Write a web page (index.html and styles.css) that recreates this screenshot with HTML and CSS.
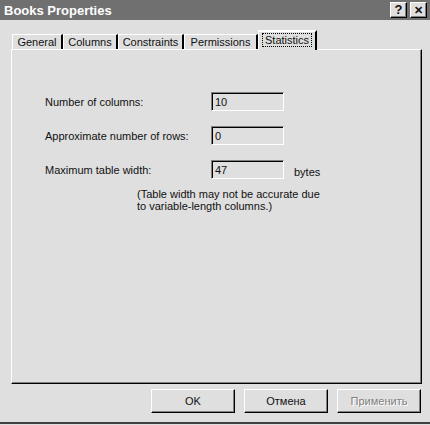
FILE: index.html
```html
<!DOCTYPE html>
<html lang="en">
<head>
<meta charset="utf-8">
<title>Books Properties</title>
<link rel="stylesheet" href="styles.css">
</head>
<body>
<div class="dlg">
  <div class="caption">
    <span class="caption-text">Books Properties</span>
    <span class="cbtn">?</span>
    <span class="cbtn x">&#x2715;</span>
  </div>
  <div class="tabs">
    <div class="tab w1">General</div>
    <div class="tab w2">Columns</div>
    <div class="tab w3">Constraints</div>
    <div class="tab w4">Permissions</div>
    <div class="tab sel w5"><span class="focus">Statistics</span></div>
  </div>
  <div class="page">
    <div class="stats">
      <span class="lbl">Number of columns:</span>
      <span class="fld">10</span>
      <span></span>
      <span class="lbl">Approximate number of rows:</span>
      <span class="fld">0</span>
      <span></span>
      <span class="lbl">Maximum table width:</span>
      <span class="fld">47</span>
      <span class="unit">bytes</span>
    </div>
    <p class="note">(Table width may not be accurate due<br>to variable-length columns.)</p>
  </div>
  <div class="btns">
    <button class="btn">OK</button>
    <button class="btn">Отмена</button>
    <button class="btn off">Применить</button>
  </div>
</div>
</body>
</html>
```
FILE: styles.css
```css
body {margin: 0; background: #dfdfdf; font-family: "Liberation Sans", Arial, sans-serif; font-size: 11px; color: #111;}
.dlg {width: 430px; height: 424px; box-sizing: border-box; border-bottom: 2px solid #404040; background: #dfdfdf;}

.caption {height: 20px; background: #707070; display: flex; align-items: center; padding: 0 3px 0 4px; gap: 2px;}
.caption-text {flex: 1; color: #fff; font-weight: bold; font-size: 13px;}
.cbtn {width: 15px; height: 14px; background: #dfdfdf; border: 1px solid; border-color: #fff #000 #000 #fff; box-shadow: inset -1px -1px 0 #808080; font-weight: bold; font-size: 13px; line-height: 14px; text-align: center;}
.cbtn.x {font-size: 11px; margin-left: 1px;}

.tabs {display: flex; align-items: flex-end; height: 29px; padding-left: 12px;}
.tab {height: 14px; box-sizing: content-box; border-top: 1px solid #fff; border-left: 1px solid #fff; border-right: 2px solid #000; text-align: center; line-height: 14px; white-space: nowrap;}
.tab.w1 {width: 48px;}
.tab.w2 {width: 52px;}
.tab.w3 {width: 63px;}
.tab.w4 {width: 71px;}
.tab.w5 {width: 56px;}
.tab.sel {height: 18px; line-height: 16px; border-top: 2px solid #fff; position: relative; top: 1px; background: #dfdfdf;}
.focus {border: 1px dotted #000; padding: 0 2px;}

.page {margin-left: 11px; border: 1px solid; border-color: #fff #000 #000 #fff; box-shadow: inset -1px -1px 0 #808080; padding: 42px 0 0 33px; box-sizing: border-box; height: 335px; width: 411px;}
.stats {display: grid; grid-template-columns: 166px 73px auto; row-gap: 15px; align-items: center;}
.fld {height: 19px; box-sizing: border-box; border: 1px solid; border-color: #808080 #fff #fff #808080; box-shadow: inset 1px 1px 0 #000; padding: 2px 0 0 3px; line-height: 14px;}
.unit {padding-left: 10px; padding-top: 4px;}
.note {margin: 9px 0 0 92px; line-height: 12px;}

.btns {display: flex; justify-content: flex-end; gap: 9px; padding: 5px 9px 0 0;}
.btn {width: 84px; height: 24px; background: #dfdfdf; border: 1px solid; border-color: #fff #000 #000 #fff; box-shadow: inset -1px -1px 0 #808080; font-family: inherit; font-size: 11px; padding: 0; color: #111;}
.btn.off {color: #808080; text-shadow: 1px 1px 0 #fff;}
```
